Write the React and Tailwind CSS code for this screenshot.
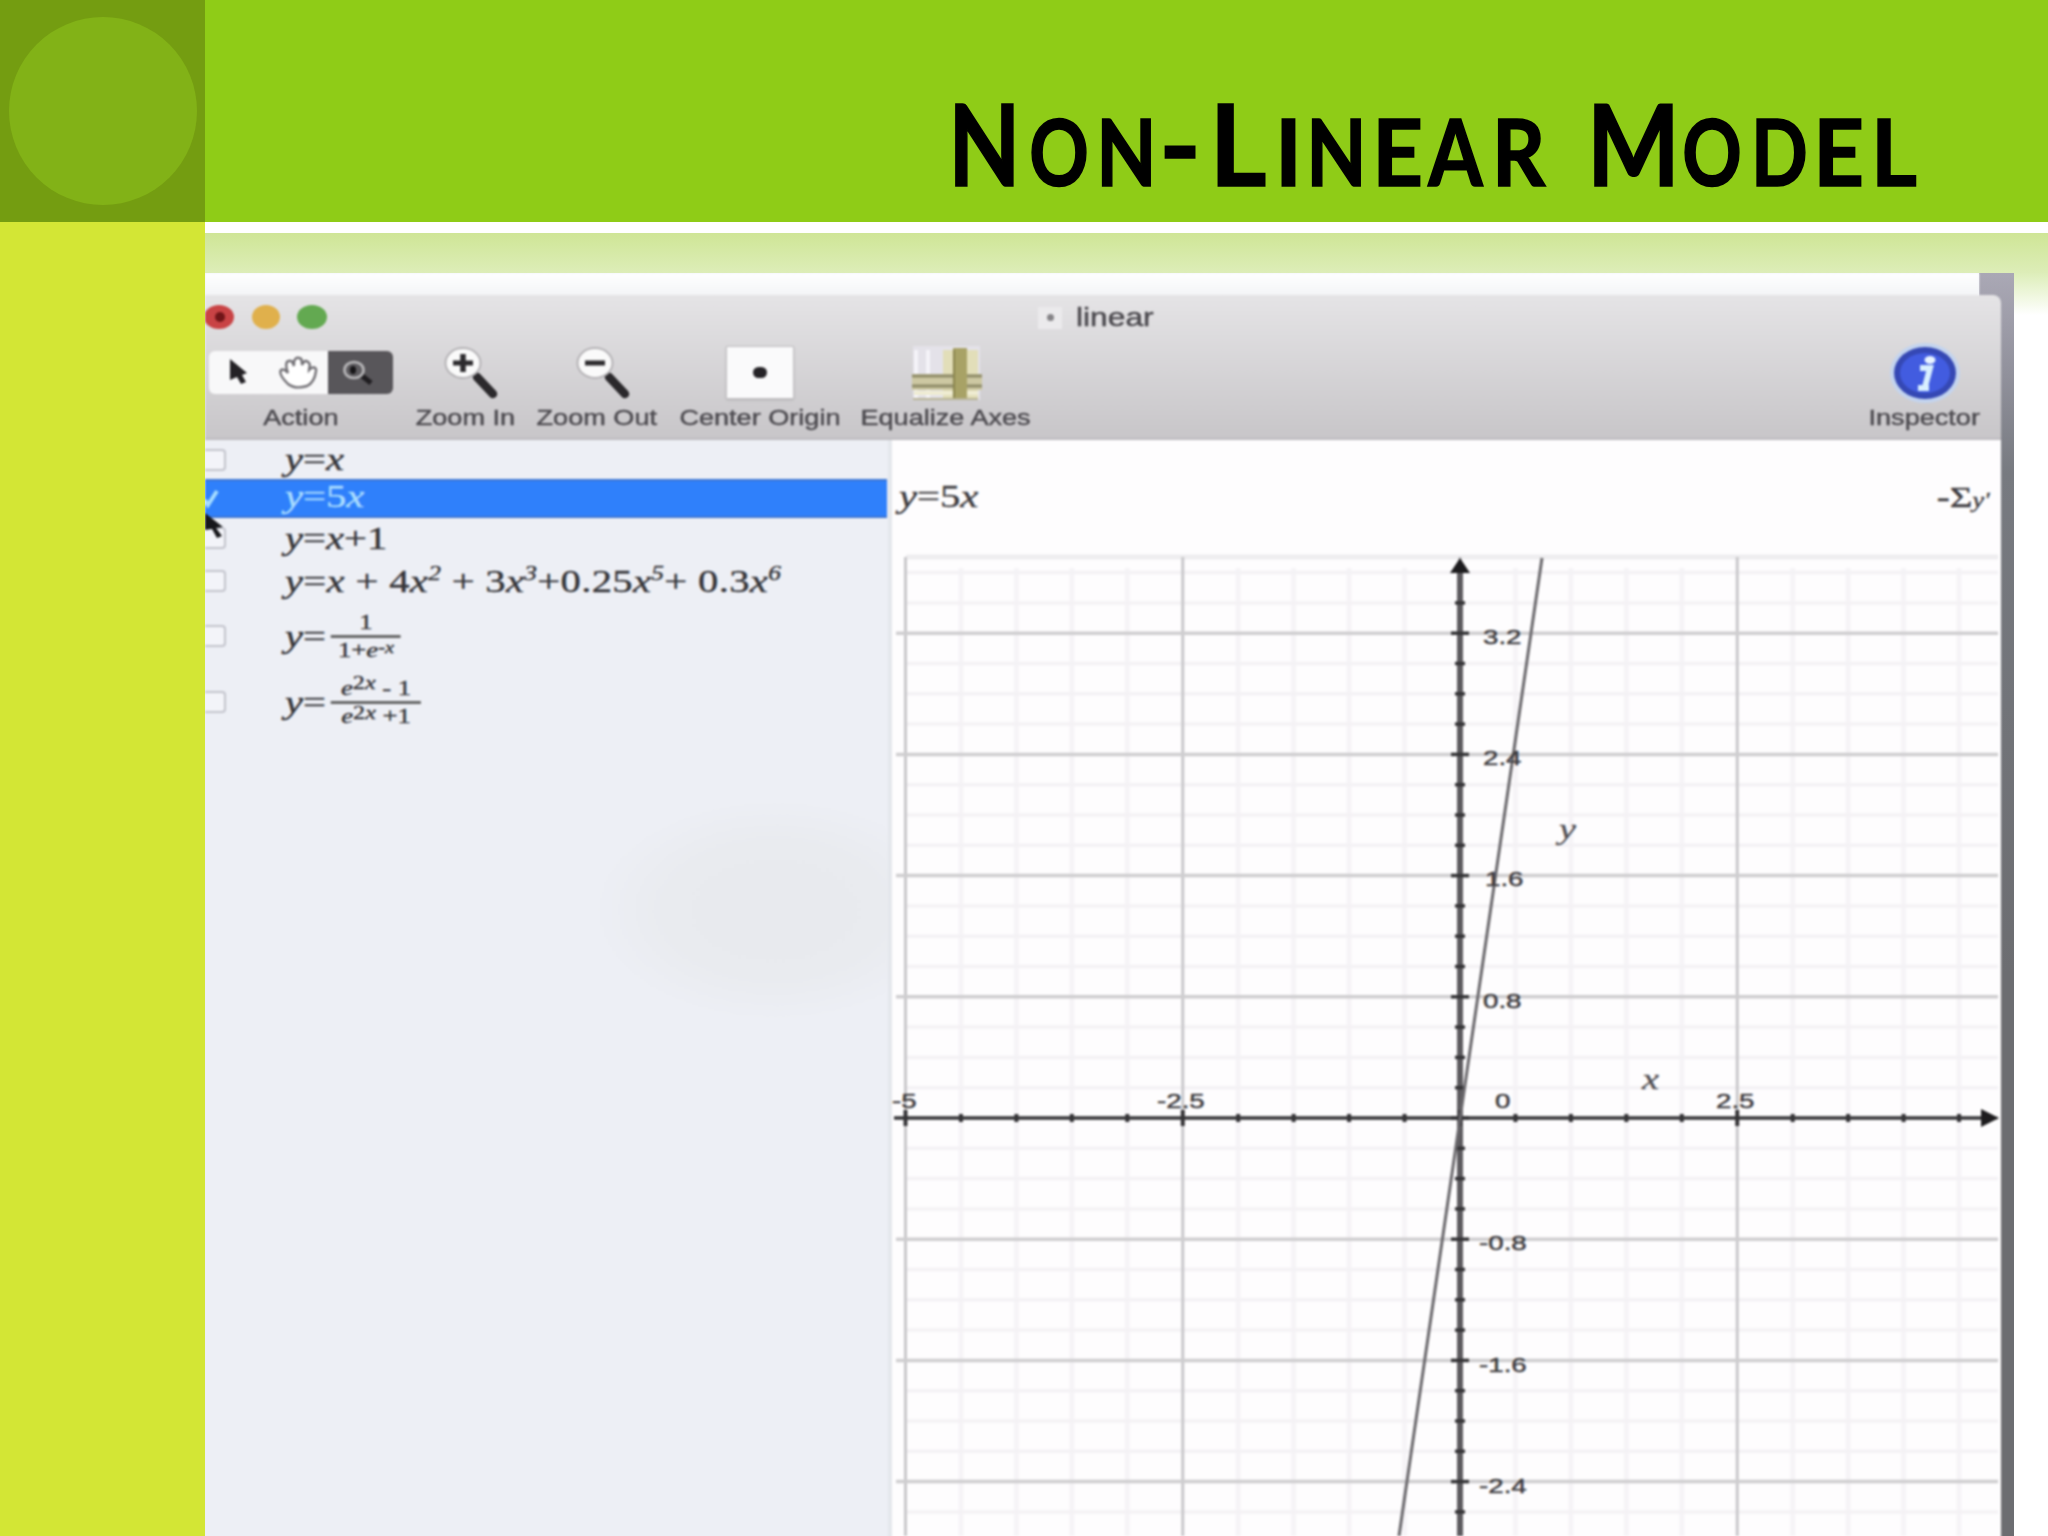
import React from 'react';

const MINOR_X = 55.45;
const MINOR_Y = 30.3;
const ORIGIN = { x: 1460, y: 1118 };

const yLabels = [
  { text: '3.2', x: 1483, y: 644 },
  { text: '2.4', x: 1483, y: 765 },
  { text: '1.6', x: 1485, y: 886 },
  { text: '0.8', x: 1483, y: 1008 },
  { text: '-0.8', x: 1479, y: 1250 },
  { text: '-1.6', x: 1479, y: 1372 },
  { text: '-2.4', x: 1479, y: 1493 },
];

const xLabels = [
  { text: '-5', x: 892, y: 1108 },
  { text: '-2.5', x: 1157, y: 1108 },
  { text: '0', x: 1495, y: 1108 },
  { text: '2.5', x: 1716, y: 1108 },
];

// Every letter of the heading sits centred in its own cell
const titleLetters = [
  { char: 'N', style: 'w-[61px] text-[113px] scale-x-[0.83]' },
  { char: 'O', style: 'ml-[15px] w-[58px] text-[91px] scale-x-[0.81]' },
  { char: 'N', style: 'ml-[14px] w-[49px] text-[91px] scale-x-[0.86]' },
  { char: '-', style: 'ml-[14px] w-[30px] text-[113px]' },
  { char: 'L', style: 'ml-[17px] w-[52px] text-[113px] scale-x-[0.97]' },
  { char: 'I', style: 'ml-[18px] w-[13px] text-[91px]' },
  { char: 'N', style: 'ml-[17px] w-[49px] text-[91px] scale-x-[0.86]' },
  { char: 'E', style: 'ml-[15px] w-[43px] text-[91px] scale-x-[0.97]' },
  { char: 'A', style: 'ml-[8px] w-[57px] text-[91px] scale-x-[0.86]' },
  { char: 'R', style: 'ml-[9px] w-[51px] text-[91px] scale-x-[0.91]' },
  { char: 'M', style: 'ml-[48px] w-[83px] text-[113px] scale-x-[0.87]' },
  { char: 'O', style: 'ml-[8px] w-[58px] text-[91px] scale-x-[0.81]' },
  { char: 'D', style: 'ml-[14px] w-[49px] text-[91px] scale-x-[0.82]' },
  { char: 'E', style: 'ml-[13px] w-[43px] text-[91px] scale-x-[0.97]' },
  { char: 'L', style: 'ml-[13px] w-[42px] text-[91px] scale-x-[0.97]' },
];

function Title() {
  return (
    <h1 className="flex items-baseline whitespace-nowrap font-['Lato',sans-serif] font-bold leading-[136px] text-black [-webkit-text-stroke:1.6px_black]">
      {titleLetters.map((l, i) => (
        <span key={i} className={`flex shrink-0 justify-center leading-[136px] ${l.style}`}>{l.char}</span>
      ))}
    </h1>
  );
}

function Equation({ children, className = '' }) {
  return (
    <span className={`inline-block origin-left scale-x-[1.27] whitespace-nowrap font-['Liberation_Serif',serif] text-[32px] leading-none ${className}`}>
      {children}
    </span>
  );
}

function Sup({ children }) {
  return <span className="relative -top-3 text-[20px] leading-none italic">{children}</span>;
}

function Fraction({ top, bottom, className }) {
  return (
    <span className={`inline-flex flex-col items-center text-[21px] leading-none ${className}`}>
      <span className="flex h-[24px] items-end pb-0.5">{top}</span>
      <span className="h-[3px] w-full bg-[#666]" />
      <span className="flex h-[24px] items-start pt-0.5">{bottom}</span>
    </span>
  );
}

function EquationRow({ height, children }) {
  return (
    <div className={`flex items-center ${height}`}>
      <div className="flex w-[80px] shrink-0">
        <div className="h-[22px] w-[21px] rounded-r-sm border-2 border-l-0 border-[#c3c4cc] bg-[#f3f4f9]" />
      </div>
      {children}
    </div>
  );
}

function ToolItem({ label, width, children }) {
  return (
    <div className={`flex shrink-0 flex-col items-center ${width}`}>
      <div className="flex h-[64px] items-center justify-center">{children}</div>
      <div className="h-[28px] scale-x-[1.26] whitespace-nowrap text-[21.5px] leading-[28px] text-[#4b494e] [-webkit-text-stroke:0.4px_#4b494e]">{label}</div>
    </div>
  );
}

function Magnifier({ plus }) {
  return (
    <svg width="76" height="64" viewBox="0 0 76 64">
      <path d="M50 37 L66 54" stroke="#2b292c" strokeWidth="8.5" strokeLinecap="round" />
      <ellipse cx="36" cy="23" rx="17.5" ry="15" fill="#fafafa" stroke="#b5b3b6" strokeWidth="2" />
      <path d="M26 23 H46" stroke="#2d2b2e" strokeWidth="5" />
      {plus && <path d="M36 14 V32" stroke="#2d2b2e" strokeWidth="5.5" />}
    </svg>
  );
}

function Toolbar() {
  return (
    <div className="h-[145px] w-[1796px] rounded-tr-lg border-b-2 border-[#bdbbbf] bg-gradient-to-b from-[#e5e4e6] to-[#c8c6c9] font-['Liberation_Sans',Arial,sans-serif]">
      <div className="flex h-[45px] items-center">
        <svg width="122" height="30" viewBox="0 0 122 30" className="shrink-0">
          <ellipse cx="14" cy="14" rx="15" ry="12" fill="#c94345" />
          <circle cx="15" cy="14" r="5" fill="#701518" />
          <ellipse cx="61" cy="14" rx="14" ry="12" fill="#e0b04c" />
          <ellipse cx="107" cy="14" rx="15" ry="12" fill="#63a951" />
        </svg>
        <div className="ml-[711px] flex items-center">
          <div className="flex h-[22px] w-[24px] items-center justify-center bg-[#ebeaec]">
            <div className="size-[7px] rounded-full bg-[#858387]" />
          </div>
          <span className="ml-[14px] origin-left scale-x-[1.27] text-[25px] leading-none text-[#4b494e] [-webkit-text-stroke:0.5px_#4b494e]">linear</span>
        </div>
      </div>
      <div className="flex pl-1">
        <ToolItem label="Action" width="w-[184px]">
          <div className="flex h-[43px] w-[184px] overflow-hidden rounded-md">
            <div className="flex w-[119px] items-center bg-[#f8f8f9]">
              <svg width="119" height="42" viewBox="0 0 119 42">
                <path d="M21 8 L38 22 L33 24 L37 31 L32 33 L28 26 L21 29 Z" fill="#242226" />
                <path d="M79 33 C73 27 70 22 72 19 C75 17 77 20 79 22 C76 15 77 10 80 10 C83 9 84 12 85 15 C84 9 87 6 90 7 C93 7 93 10 93 14 C95 9 98 9 100 12 C102 14 100 17 100 19 C103 15 108 16 107 20 C106 28 102 33 98 35 C91 37 84 37 79 33 Z" fill="#fff" stroke="#737176" strokeWidth="2.4" />
              </svg>
            </div>
            <div className="w-[65px] bg-[#58565a]">
              <svg width="65" height="43" viewBox="0 0 65 43">
                <path d="M33 24 L43 32" stroke="#1f1d20" strokeWidth="5" />
                <ellipse cx="26" cy="19" rx="9.5" ry="8" fill="#5d5b5f" stroke="#b9b8ba" strokeWidth="2.6" />
                <ellipse cx="25" cy="19" rx="3" ry="4" fill="#161517" />
              </svg>
            </div>
          </div>
        </ToolItem>
        <ToolItem label="Zoom In" width="ml-[5px] w-[134px]">
          <Magnifier plus />
        </ToolItem>
        <ToolItem label="Zoom Out" width="w-[130px]">
          <Magnifier />
        </ToolItem>
        <ToolItem label="Center Origin" width="w-[196px]">
          <div className="flex h-[53px] w-[68px] items-center justify-center border border-[#c2c0c3] bg-[#fafafb] shadow-sm">
            <div className="h-[11px] w-[14px] rounded-full bg-[#252327]" />
          </div>
        </ToolItem>
        <ToolItem label="Equalize Axes" width="w-[176px]">
          <svg width="76" height="64" viewBox="0 0 76 64">
            <rect x="5" y="6" width="67" height="54" fill="#e4e2e9" />
            <path d="M8 10 V58 M20 10 V58" stroke="#f4f3f8" strokeWidth="4" />
            <rect x="35" y="10" width="35" height="49" fill="#e2deb9" />
            <rect x="4" y="34" width="70" height="16" fill="#cdc8a2" />
            <path d="M4 36 H74 M4 46 H74" stroke="#908c69" strokeWidth="3" />
            <path d="M6 53 H70" stroke="#efecd2" strokeWidth="4" />
            <rect x="45" y="8" width="14" height="52" fill="#a8a266" />
            <path d="M46 10 V59" stroke="#8a854e" strokeWidth="2" />
            <path d="M5 59 H70" stroke="#b8b396" strokeWidth="2" />
          </svg>
        </ToolItem>
        <ToolItem label="Inspector" width="ml-auto mr-px w-[152px]">
          <svg width="72" height="64" viewBox="0 0 72 64">
            <ellipse cx="37" cy="33" rx="35" ry="30" fill="#c3d4ef" />
            <ellipse cx="37" cy="33" rx="31" ry="26" fill="#3548b4" />
            <ellipse cx="37" cy="33" rx="25" ry="20" fill="#425ce0" />
            <ellipse cx="42" cy="20" rx="5.5" ry="4" fill="#e8f4ff" />
            <path d="M32 28 H42 L37 47 M30 48 H41" stroke="#d8efff" strokeWidth="6" fill="none" />
          </svg>
        </ToolItem>
      </div>
    </div>
  );
}

function Sidebar() {
  return (
    <div className="relative w-[687px] shrink-0 border-r-[4px] border-[#e4e7ec] bg-[#edeff5] bg-[radial-gradient(ellipse_180px_110px_at_570px_470px,#e8eaee_0%,#e9ebef_60%,#edeff5_100%)] text-[#353539] [-webkit-text-stroke:0.4px_currentColor]">
      <EquationRow height="h-[39px]">
        <Equation className="mb-0.5"><i>y</i>=<i>x</i></Equation>
      </EquationRow>
      <div className="flex h-[39px] w-[682px] items-center border-y-2 border-[#3d76d4] bg-[#2f80fb] text-[#a9dcff]">
        <svg width="80" height="35" viewBox="0 0 80 35" className="shrink-0">
          <path d="M0 19 L3 24 L12 10" stroke="#a5dcff" strokeWidth="4" fill="none" />
        </svg>
        <Equation className="mb-[5px]"><i>y</i>=5<i>x</i></Equation>
      </div>
      <EquationRow height="h-[40px]">
        <Equation><i>y</i>=<i>x</i>+1</Equation>
      </EquationRow>
      <EquationRow height="h-[46px]">
        <Equation className="tracking-[0.25px]">
          <i>y</i>=<i>x</i> + 4<i>x</i><Sup>2</Sup> + 3<i>x</i><Sup>3</Sup>+0.25<i>x</i><Sup>5</Sup>+ 0.3<i>x</i><Sup>6</Sup>
        </Equation>
      </EquationRow>
      <EquationRow height="h-[64px]">
        <Equation>
          <span className="flex items-center">
            <i>y</i>=
            <Fraction
              className="ml-1 w-[55px]"
              top="1"
              bottom={<span>1+<i>e</i><span className="relative -top-1 text-[16px] italic">-x</span></span>}
            />
          </span>
        </Equation>
      </EquationRow>
      <EquationRow height="h-[68px]">
        <Equation>
          <span className="flex items-center">
            <i>y</i>=
            <Fraction
              className="ml-1 w-[71px]"
              top={<span><i>e</i><span className="relative -top-1.5 text-[19px]">2<i>x</i></span> - 1</span>}
              bottom={<span><i>e</i><span className="relative -top-1 text-[19px]">2<i>x</i></span> +1</span>}
            />
          </span>
        </Equation>
      </EquationRow>
      {/* Mouse pointer over the checkboxes */}
      <svg width="24" height="30" viewBox="0 0 24 30" className="absolute left-0 top-[70px]">
        <path d="M0 3 L18 17 L11 18 L17 26 L12 28 L7 19 L0 20 Z" fill="#17171b" />
      </svg>
    </div>
  );
}

function StretchedText({ x, y, children }) {
  return (
    <text transform={`translate(${x} ${y}) scale(1.32 1)`}>
      {children}
    </text>
  );
}

function Graph() {
  const cols = Array.from({ length: 20 }, (_, i) => i - 10);
  const rows = Array.from({ length: 32 }, (_, i) => i - 18);

  return (
    <svg width="1109" height="984" viewBox="892 552 1109 984" className="block">
      <path d="M906 557 H1998" stroke="#eeedef" strokeWidth="5" />
      {cols.filter((i) => i % 5 !== 0).map((i) => {
        const x = ORIGIN.x + i * MINOR_X;
        return <path key={i} d={`M${x} 568 V1536`} stroke="#f6f4f7" strokeWidth="5" />;
      })}
      {rows.filter((i) => i % 4 !== 0).map((i) => {
        const y = ORIGIN.y + i * MINOR_Y;
        return <path key={i} d={`M906 ${y} H1998`} stroke="#f4f2f5" strokeWidth="3.5" />;
      })}
      {cols.filter((i) => i % 5 === 0).map((i) => {
        const x = ORIGIN.x + i * MINOR_X;
        return <path key={i} d={`M${x} 557 V1536`} stroke="#c9c8cb" strokeWidth="3" />;
      })}
      {rows.filter((i) => i % 4 === 0).map((i) => {
        const y = ORIGIN.y + i * MINOR_Y;
        return <path key={i} d={`M896 ${y} H1998`} stroke="#cfced0" strokeWidth="3.5" />;
      })}

      {/* Axes */}
      <path d="M1460 566 V1536" stroke="#5d5b5f" strokeWidth="6" />
      <path d="M1450 573 L1460 558 L1470 573 Z" fill="#1d1c1e" />
      <path d="M894 1118 H1985" stroke="#39383b" strokeWidth="3.5" />
      <path d="M1981 1109 L1999 1118 L1981 1127 Z" fill="#1d1c1e" />
      {rows.filter((i) => i > -18).map((i) => {
        const y = ORIGIN.y + i * MINOR_Y;
        const half = i % 4 === 0 ? 9 : 5;
        return <path key={i} d={`M${ORIGIN.x - half} ${y} h${half * 2}`} stroke="#343336" strokeWidth="3.5" />;
      })}
      {cols.map((i) => {
        const x = ORIGIN.x + i * MINOR_X;
        const half = i % 5 === 0 ? 8 : 4;
        return <path key={i} d={`M${x} ${ORIGIN.y - half} v${half * 2}`} stroke="#343336" strokeWidth="4" />;
      })}

      {/* y = 5x */}
      <path d="M1542 558 L1399 1536" stroke="#6a686c" strokeWidth="3" />

      <g className="font-['Liberation_Sans',Arial,sans-serif] text-[21px]" fill="#3f3d41" stroke="#3f3d41" strokeWidth="0.5">
        {[...yLabels, ...xLabels].map((l) => (
          <StretchedText key={l.text} x={l.x} y={l.y}>{l.text}</StretchedText>
        ))}
      </g>
      <g className="font-['Liberation_Serif',serif] text-[29px] italic" fill="#504e52" stroke="#504e52" strokeWidth="0.3">
        <StretchedText x={1559} y={839}>y</StretchedText>
        <StretchedText x={1642} y={1089}>x</StretchedText>
      </g>
    </svg>
  );
}

export default function App() {
  return (
    <div className="flex h-[1536px] w-[2048px] overflow-hidden bg-white">
      {/* Left band */}
      <div className="flex w-[205px] shrink-0 flex-col bg-[#d3e635]">
        <div className="flex h-[222px] justify-center bg-[#749d11] pt-[17px]">
          <div className="size-[188px] rounded-full bg-[#82b217]" />
        </div>
      </div>

      <div className="flex w-[1843px] flex-col">
        <div className="h-[222px] shrink-0 bg-[#8fcc17] pl-[749px] pt-[74px]">
          <Title />
        </div>

        <div className="mt-[11px] h-[40px] shrink-0 bg-[linear-gradient(to_bottom,#cfe596_0px,#d3e8a0_12px,#ddedb8_40px)]" />

        <div className="flex h-[1263px] bg-[linear-gradient(to_bottom,#ddeeb9_0px,#fff_42px)]">
          {/* Screen capture of the graphing app */}
          <div className="w-[1809px] overflow-hidden bg-[#edeff5] bg-[linear-gradient(to_bottom,#aaa8b5_0px,#91919c_100px,#777a80_200px,#6c6d71_700px)] bg-[length:35px_100%] bg-right bg-no-repeat">
            <div className="blur-[0.9px]">
              <div className="h-[22px] w-[1774px] bg-gradient-to-b from-white to-[#f4f5f7]" />
              <Toolbar />
              <div className="flex h-[1104px] w-[1796px]">
                <Sidebar />
                <div className="w-[1109px] bg-[#fefdfe]">
                  <div className="flex h-[112px] justify-between pl-[7px] pr-[11px] pt-[40px] text-[#3f3d41] [-webkit-text-stroke:0.4px_currentColor]">
                    <Equation><i>y</i>=5<i>x</i></Equation>
                    <span className="origin-right scale-x-[1.3] whitespace-nowrap font-['Liberation_Serif',serif] text-[30px] leading-[34px]">
                      -Σ<i className="text-[20px]">y'</i>
                    </span>
                  </div>
                  <Graph />
                </div>
              </div>
            </div>
          </div>
        </div>
      </div>
    </div>
  );
}
